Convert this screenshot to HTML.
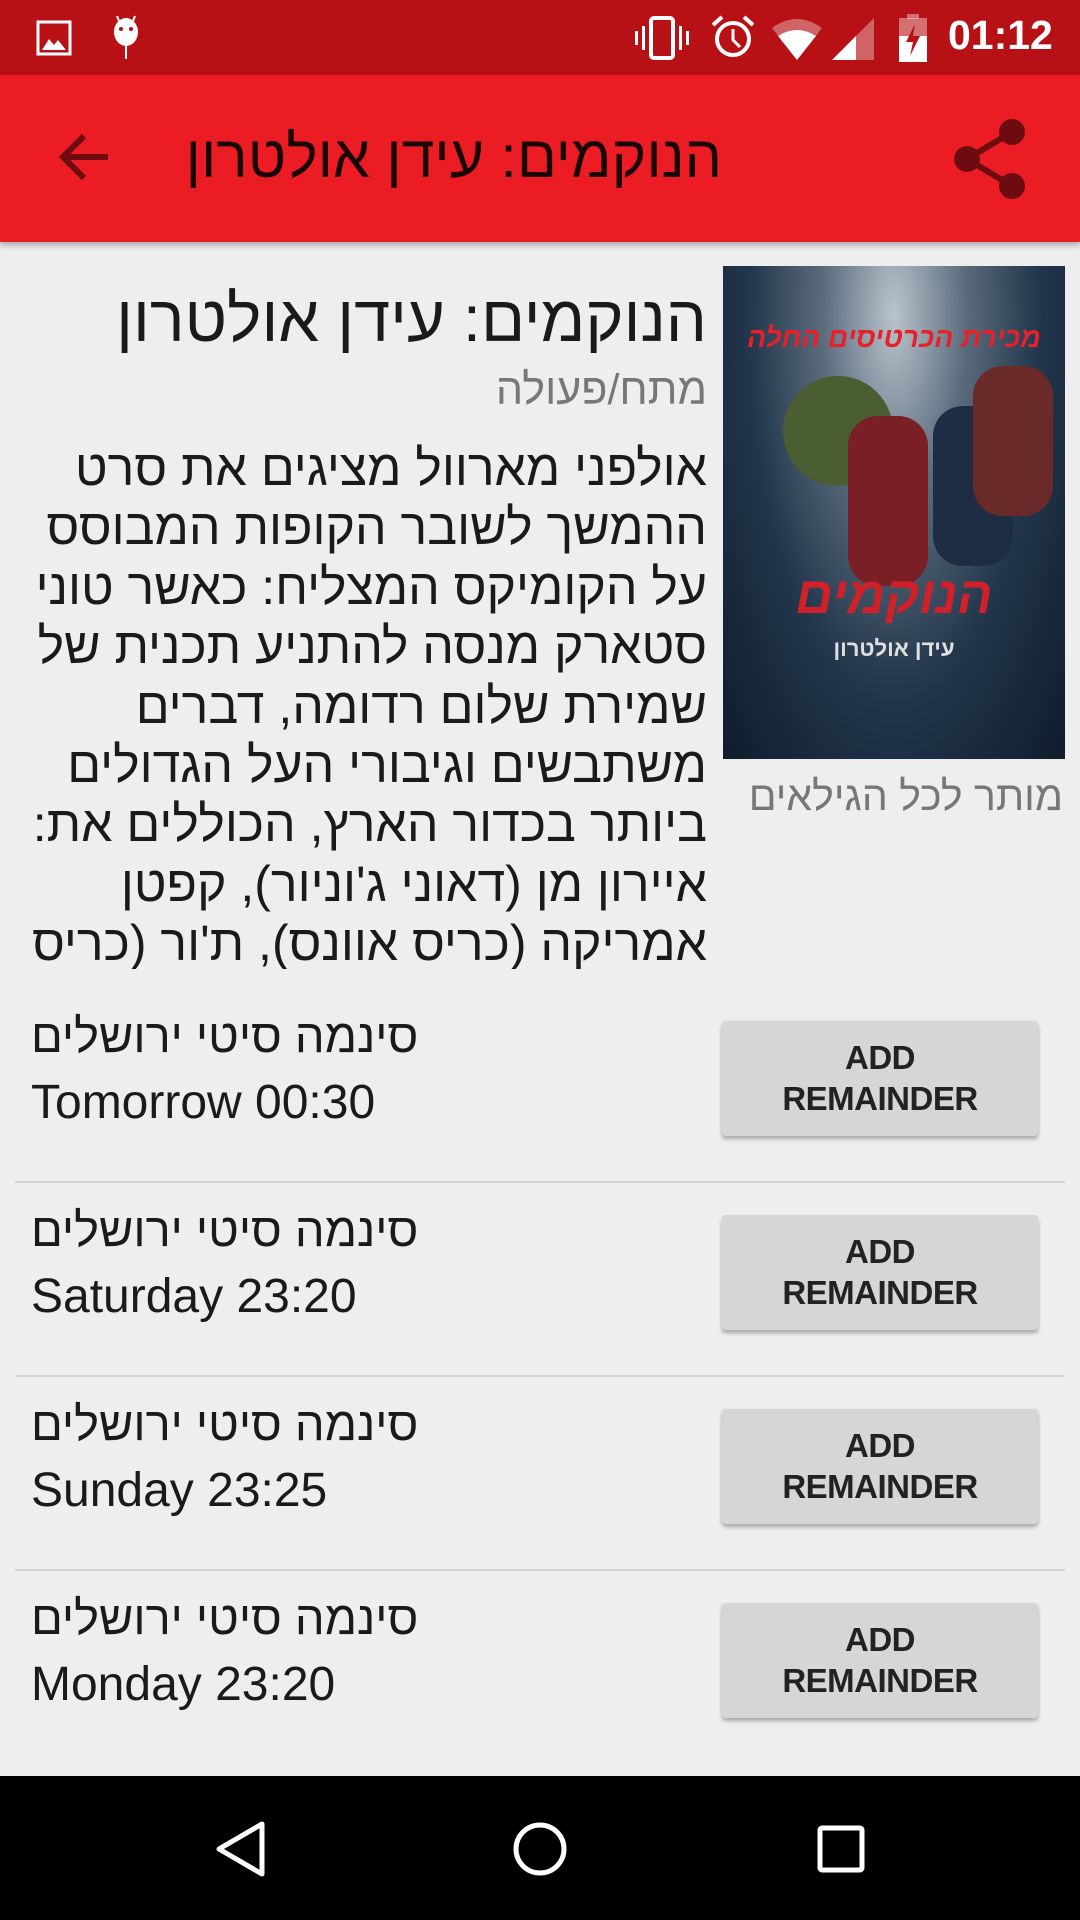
<!DOCTYPE html>
<html><head><meta charset="utf-8"><style>
*{margin:0;padding:0;box-sizing:border-box}
body{width:1080px;height:1920px;background:#eeeeee;font-family:"Liberation Sans","Noto Sans CJK SC",sans-serif;position:relative;overflow:hidden}
.abs{position:absolute}
#sb{left:0;top:0;width:1080px;height:75px;background:#b71015}
#tb{left:0;top:75px;width:1080px;height:167px;background:#ec1c24;box-shadow:0 3px 6px rgba(0,0,0,.3)}
.rtl{direction:rtl;text-align:right}
.desc div{height:59.4px;line-height:59.4px;white-space:nowrap}
.row{left:31px;color:#1a1a1a;white-space:nowrap}
.row .h{display:block;font-size:47px;height:67px;line-height:67px}
.row .e{display:block;font-size:48px;height:67px;line-height:67px}
.btn{left:722px;width:316px;height:115px;background:#d6d6d6;border-radius:4px;box-shadow:0 3px 4px rgba(0,0,0,.3);text-align:center;font-size:33px;font-weight:bold;color:#222;line-height:41px;padding-top:16px;letter-spacing:-0.5px}
.div{left:15px;width:1050px;height:2px;background:#d2d2d2}
#nav{left:0;top:1776px;width:1080px;height:144px;background:#000}
</style></head><body>
<div id="sb" class="abs">
 <svg class="abs" style="left:36px;top:20px" width="36" height="36" viewBox="0 0 36 36"><rect x="2" y="2" width="32" height="32" fill="none" stroke="#fff" stroke-width="3"/><path d="M6 30 L13 19 L18 25 L22 20 L30 30Z" fill="#fff"/></svg>
 <svg class="abs" style="left:108px;top:14px" width="36" height="46" viewBox="0 0 36 46"><ellipse cx="18" cy="18" rx="12" ry="14" fill="#fff"/><line x1="9" y1="2" x2="11" y2="7" stroke="#fff" stroke-width="2"/><line x1="27" y1="2" x2="25" y2="7" stroke="#fff" stroke-width="2"/><circle cx="13" cy="15" r="2" fill="#b71015"/><circle cx="23" cy="15" r="2" fill="#b71015"/><rect x="17" y="31" width="2" height="14" fill="#fff"/></svg>
 <svg class="abs" style="left:634px;top:16px" width="56" height="44" viewBox="0 0 56 44"><rect x="17" y="2" width="22" height="40" rx="3" fill="none" stroke="#fff" stroke-width="4"/><rect x="8" y="10" width="3" height="24" fill="#fff"/><rect x="1" y="15" width="3" height="14" fill="#fff"/><rect x="45" y="10" width="3" height="24" fill="#fff"/><rect x="52" y="15" width="3" height="14" fill="#fff"/></svg>
 <svg class="abs" style="left:710px;top:14px" width="46" height="46" viewBox="0 0 46 46"><circle cx="23" cy="25" r="16" fill="none" stroke="#fff" stroke-width="4"/><path d="M23 15V26L30 33" fill="none" stroke="#fff" stroke-width="3"/><path d="M3 11L12 3M43 11L34 3" stroke="#fff" stroke-width="4"/></svg>
 <svg class="abs" style="left:772px;top:16px" width="104" height="44" viewBox="0 0 104 44"><path d="M0 12 Q25 -6 50 12 L25 44Z" fill="#fff" opacity=".35"/><path d="M6 20 Q25 8 44 20 L25 44Z" fill="#fff"/><path d="M60 44 L102 2 V44Z" fill="#fff" opacity=".35"/><path d="M60 44 L84 20 V44Z" fill="#fff"/></svg>
 <svg class="abs" style="left:898px;top:14px" width="30" height="48" viewBox="0 0 30 48"><rect x="9" y="0" width="12" height="5" fill="#fff" opacity=".4"/><rect x="1" y="4" width="28" height="44" fill="#fff" opacity=".4"/><rect x="1" y="22" width="28" height="26" fill="#fff"/><path d="M17 10 L8 28 H15 L12 42 L22 22 H15Z" fill="#b71015"/></svg>
 <div class="abs" style="left:948px;top:12px;font-size:41px;color:#fff;font-weight:bold">01:12</div>
</div>
<div id="tb" class="abs">
 <svg class="abs" style="left:56px;top:53px" width="58" height="58" viewBox="0 0 58 58"><path d="M52 29H10M28 8L7 29L28 50" fill="none" stroke="#6e0b10" stroke-width="6"/></svg>
 <div class="abs rtl" style="right:358px;top:48px;font-size:59px;color:#1a0505;white-space:nowrap">הנוקמים: עידן אולטרון</div>
 <svg class="abs" style="left:952px;top:42px" width="76" height="84" viewBox="0 0 76 84"><circle cx="60" cy="15" r="13" fill="#6e0b10"/><circle cx="15" cy="42" r="13" fill="#6e0b10"/><circle cx="60" cy="69" r="13" fill="#6e0b10"/><path d="M60 15L15 42L60 69" fill="none" stroke="#6e0b10" stroke-width="6"/></svg>
</div>
<div class="abs" style="left:723px;top:266px;width:342px;height:493px;background:radial-gradient(ellipse at 50% 10%,#b9c3cc 0%,#5a6b7c 30%,#22364c 60%,#0f1c2c 100%);overflow:hidden">
 <div class="abs" style="left:60px;top:110px;width:110px;height:110px;border-radius:50%;background:#4b5e32"></div>
 <div class="abs" style="left:125px;top:150px;width:80px;height:170px;background:#7a1f26;border-radius:30px"></div>
 <div class="abs" style="left:210px;top:140px;width:80px;height:160px;background:#1f2d44;border-radius:30px"></div>
 <div class="abs" style="left:250px;top:100px;width:80px;height:150px;background:#6a2a2a;border-radius:30px"></div>
 <div class="abs" style="left:0;top:56px;width:342px;text-align:center;color:#e8202a;font-weight:bold;font-size:28px;font-style:italic;direction:rtl">מכירת הכרטיסים החלה</div>
 <div class="abs" style="left:0;top:300px;width:342px;text-align:center;color:#d0202a;font-weight:bold;font-size:52px;font-style:italic;direction:rtl">הנוקמים</div>
 <div class="abs" style="left:0;top:370px;width:342px;text-align:center;color:#e0e0e0;font-weight:bold;font-size:22px;direction:rtl">עידן אולטרון</div>
</div>
<div class="abs rtl" style="right:17px;top:773px;font-size:41px;color:#777;white-space:nowrap">מותר לכל הגילאים</div>
<div class="abs rtl" style="right:373px;top:281px;font-size:65px;color:#1a1a1a;white-space:nowrap">הנוקמים: עידן אולטרון</div>
<div class="abs rtl" style="right:373px;top:366px;font-size:43px;color:#777;white-space:nowrap">מתח/פעולה</div>
<div class="abs rtl desc" style="right:373px;top:439px;width:707px;font-size:50px;color:#1a1a1a;height:530px;overflow:hidden">
<div>אולפני מארוול מציגים את סרט</div>
<div>ההמשך לשובר הקופות המבוסס</div>
<div>על הקומיקס המצליח: כאשר טוני</div>
<div>סטארק מנסה להתניע תכנית של</div>
<div>שמירת שלום רדומה, דברים</div>
<div>משתבשים וגיבורי העל הגדולים</div>
<div>ביותר בכדור הארץ, הכוללים את:</div>
<div>איירון מן (דאוני ג'וניור), קפטן</div>
<div>אמריקה (כריס אוונס), ת'ור (כריס</div>
</div>

<div class="abs row" style="top:1002px"><span class="h">סינמה סיטי ירושלים</span><span class="e">Tomorrow 00:30</span></div>
<div class="abs btn" style="top:1021px">ADD<br>REMAINDER</div>
<div class="abs div" style="top:1181px"></div>
<div class="abs row" style="top:1196px"><span class="h">סינמה סיטי ירושלים</span><span class="e">Saturday 23:20</span></div>
<div class="abs btn" style="top:1215px">ADD<br>REMAINDER</div>
<div class="abs div" style="top:1375px"></div>
<div class="abs row" style="top:1390px"><span class="h">סינמה סיטי ירושלים</span><span class="e">Sunday 23:25</span></div>
<div class="abs btn" style="top:1409px">ADD<br>REMAINDER</div>
<div class="abs div" style="top:1569px"></div>
<div class="abs row" style="top:1584px"><span class="h">סינמה סיטי ירושלים</span><span class="e">Monday 23:20</span></div>
<div class="abs btn" style="top:1603px">ADD<br>REMAINDER</div>

<div id="nav" class="abs">
 <svg class="abs" style="left:212px;top:44px" width="56" height="58" viewBox="0 0 56 58"><path d="M50 4V54L7 29Z" fill="none" stroke="#fff" stroke-width="5" stroke-linejoin="round"/></svg>
 <svg class="abs" style="left:512px;top:45px" width="56" height="56" viewBox="0 0 56 56"><circle cx="28" cy="28" r="24" fill="none" stroke="#fff" stroke-width="5"/></svg>
 <svg class="abs" style="left:816px;top:48px" width="50" height="50" viewBox="0 0 50 50"><rect x="4" y="4" width="42" height="42" rx="2" fill="none" stroke="#fff" stroke-width="5"/></svg>
</div>
</body></html>
